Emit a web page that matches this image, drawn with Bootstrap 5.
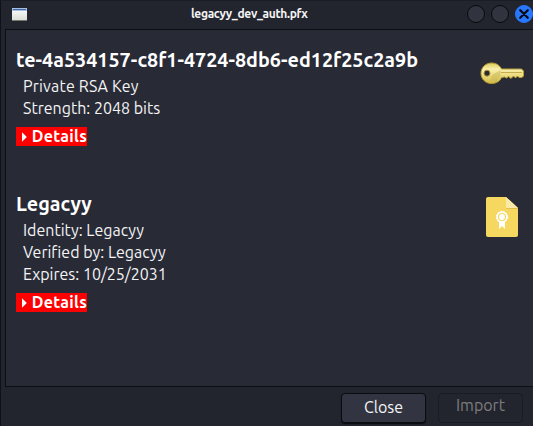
<!DOCTYPE html>
<html lang="en">
<head>
<meta charset="utf-8">
<meta name="viewport" content="width=device-width, initial-scale=1">
<title>legacyy_dev_auth.pfx</title>
<link href="https://cdn.jsdelivr.net/npm/bootstrap@5.3.0/dist/css/bootstrap.min.css" rel="stylesheet">
<style>
body{font-family:Ubuntu,"Noto Sans",sans-serif;font-size:16px;line-height:22px;color:#f4f4f5;background:#23252e}
.window{height:426px;border-left:1px solid #101116;border-top:1px solid #1b1d25}
.titlebar{height:28px;padding:0 0 2px 11px}
.caption{font-size:12px;font-weight:700;letter-spacing:-.33px;line-height:26px}
.side-left{width:179px}
.dots{gap:6px}
.dot{width:18px;height:18px;border:1px solid #090a0e;background:#31343f}
.dot-close{background:#2777ff;border-color:#2777ff}
.panel{height:358px;margin-left:4px;border:1px solid #0d0e13;border-right:0;background:#282a36;padding:18px 8px 0 10px}
.entry{height:144px}
.entry h1{font-size:19.75px;line-height:24px;font-weight:700;color:#fff;margin:0 0 3px}
.entry .lines{padding-left:7px}
.entry .lines div{white-space:nowrap}
.details{height:19px;width:71px;margin-top:8px;background:#f00;color:#fff;font-weight:700;font-size:16px;line-height:19px;padding:0 0 0 6px;border:0;gap:5px}
.t-priv{letter-spacing:.2px}
.t-det{letter-spacing:.3px}
.key{margin-top:14px}
.cert{margin-right:7px}
.footer-bar{height:39px;padding:6px 10px 3px 0;gap:12px}
.footer-bar .btn{width:85px;height:30px;padding:0 0 2px;border-radius:4px;font-size:16px;line-height:24px;border:1px solid #0b0c10;color:#f4f4f5;background:#323541;box-shadow:0 1px 1px #0b0c10}
.footer-bar .btn:disabled{color:#7d7d7d;background:#23252e;border-color:#1a1b23;opacity:1;box-shadow:none;padding-bottom:6px;line-height:20px}
</style>
<script src="https://cdn.jsdelivr.net/npm/bootstrap@5.3.0/dist/js/bootstrap.bundle.min.js"></script>
</head>
<body class="overflow-hidden">
<div class="window d-flex flex-column">
  <header class="titlebar d-flex align-items-center">
    <div class="side-left d-flex"><svg width="15" height="13" viewBox="0 0 15 13"><defs><linearGradient id="win" x2="0" y2="1"><stop stop-color="#fff"/><stop offset="1" stop-color="#dcded7"/></linearGradient></defs><rect width="15" height="12" fill="url(#win)"/><path d="M0 0h15v3H0z" fill="#a9c0e2"/><path d="M1 1h13v1H1z" fill="#3e67a5"/><path d="M0 12h15v1H0z" fill="#77796f"/></svg></div>
    <span class="caption">legacyy_dev_auth.pfx</span>
    <div class="dots d-flex ms-auto">
      <span class="dot rounded-circle flex-shrink-0"></span><span class="dot rounded-circle flex-shrink-0"></span>
      <span class="dot dot-close rounded-circle flex-shrink-0 d-flex align-items-center justify-content-center"><svg width="10" height="10" viewBox="0 0 8 8"><path d="M1 1l6 6M7 1L1 7" stroke="#080b16" stroke-width="1.800" stroke-linecap="round"/></svg></span>
    </div>
  </header>
  <main class="panel">
    <section class="entry d-flex justify-content-between">
      <div><h1>te-4a534157-c8f1-4724-8db6-ed12f25c2a9b</h1>
        <div class="lines"><div><span class="t-priv">Private RSA Key</span></div><div>Strength: 2048 bits</div></div>
        <button class="details d-flex align-items-center"><svg width="5" height="10" viewBox="0 0 5 10"><path d="M0 0l5 5-5 5z" fill="#fff"/></svg><span class="t-det">Details</span></button>
      </div>
      <svg class="key flex-shrink-0" width="45" height="23" viewBox="0 0 45 23"><defs><linearGradient id="key" x2="0" y2="1"><stop stop-color="#dccb55"/><stop offset=".3" stop-color="#f8efae"/><stop offset=".6" stop-color="#ecdc80"/><stop offset="1" stop-color="#d2ba40"/></linearGradient></defs><path d="M11.500 1C17 1 20 4 21.500 7H41.500l2 2v5l-1.500 1.500h-3l-1.500-1.500-2 2-2-2-2.500 2.500-2.500-2-2 1.500L24.500 15l-3 .5C20 19 16.500 21.500 11.500 21.500 5.500 21.500 1 17 1 11.300S5.500 1 11.500 1z" fill="url(#key)" stroke="#b39d35"/><path d="M12 13l8.500-5v6l-4 5.500H10z" fill="#c8b453" opacity=".5"/><path d="M21 10.500h21" stroke="#c4ae4b"/><circle cx="7" cy="11.200" r="3" fill="#282a36" stroke="#b09a33"/></svg>
    </section>
    <section class="entry d-flex justify-content-between">
      <div><h1>Legacyy</h1>
        <div class="lines"><div>Identity: Legacyy</div><div>Verified by: Legacyy</div><div>Expires: 10/25/2031</div></div>
        <button class="details d-flex align-items-center"><svg width="5" height="10" viewBox="0 0 5 10"><path d="M0 0l5 5-5 5z" fill="#fff"/></svg><span class="t-det">Details</span></button>
      </div>
      <svg class="cert mt-1 flex-shrink-0" width="32" height="42" viewBox="0 0 32 42"><path d="M2 1h18l12 11v27q0 2-2 2H2q-2 0-2-2V3q0-2 2-2z" fill="#f6d860"/><path d="M20 1l12 11H20z" fill="#faeaa9"/><path d="M20 12h12v1H21z" fill="#dfc04c"/><path d="M13 25v8l3-3 3 3v-8z" fill="#fff"/><circle cx="16" cy="21" r="5.700" fill="#fff" stroke="#fff" stroke-dasharray="1.800 1.200"/><circle cx="16" cy="21" r="3.500" fill="#fff" stroke="#f6d860" stroke-width="1.200"/></svg>
    </section>
  </main>
  <footer class="footer-bar d-flex justify-content-end">
    <button class="btn">Close</button>
    <button class="btn" disabled>Import</button>
  </footer>
</div>
</body>
</html>
